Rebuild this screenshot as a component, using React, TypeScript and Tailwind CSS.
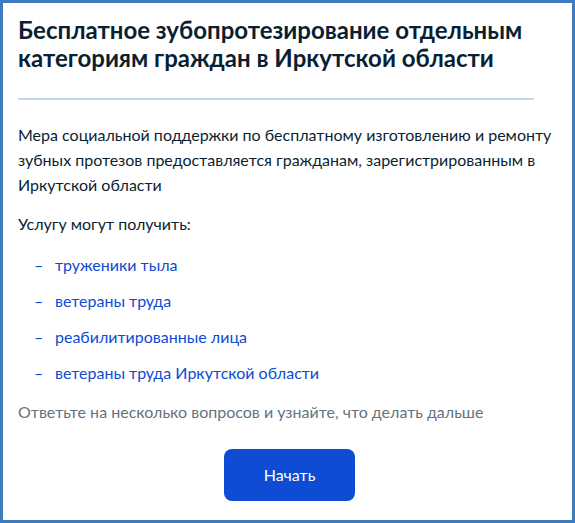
const groups = ['труженики тыла', 'ветераны труда', 'реабилитированные лица', 'ветераны труда Иркутской области'];

export default function App() {
  return (
    <div
      className="w-[575px] h-[523px] border-[3px] border-[#3f7bbf] bg-white text-[#0b1f33] overflow-hidden"
      style={{ fontFamily: 'Lato, "Noto Sans", sans-serif' }}
    >
      <div className="pl-[15px] pr-[18px] pt-[13px]">
        <h1 className="text-[24px] leading-[28px] font-bold">
          Бесплатное зубопротезирование отдельным категориям граждан в Иркутской области
        </h1>
        <div className="mt-[26px] w-[516px] h-[2px] bg-[#c8d6f0]" />
        <p className="mt-[22px] text-[16px] leading-[25px]">
          Мера социальной поддержки по бесплатному изготовлению и ремонту зубных протезов предоставляется гражданам,
          зарегистрированным в Иркутской области
        </p>
        <p className="mt-[14px] text-[16px] leading-[25px]">Услугу могут получить:</p>
        <ul className="mt-[16px] flex flex-col gap-[11px]">
          {groups.map((g) => (
            <li key={g} className="flex text-[16px] leading-[25px] text-[#0d4cd3]">
              <span className="w-[37px] pl-[16px]">–</span>
              <span>{g}</span>
            </li>
          ))}
        </ul>
        <p className="mt-[14px] text-[16px] leading-[25px] text-[#66727f]">
          Ответьте на несколько вопросов и узнайте, что делать дальше
        </p>
        <button
          type="button"
          className="mt-[25px] ml-[206px] w-[131px] h-[52px] rounded-[8px] bg-[#0d4cd3] text-white text-[16px]"
        >
          Начать
        </button>
      </div>
    </div>
  );
}
